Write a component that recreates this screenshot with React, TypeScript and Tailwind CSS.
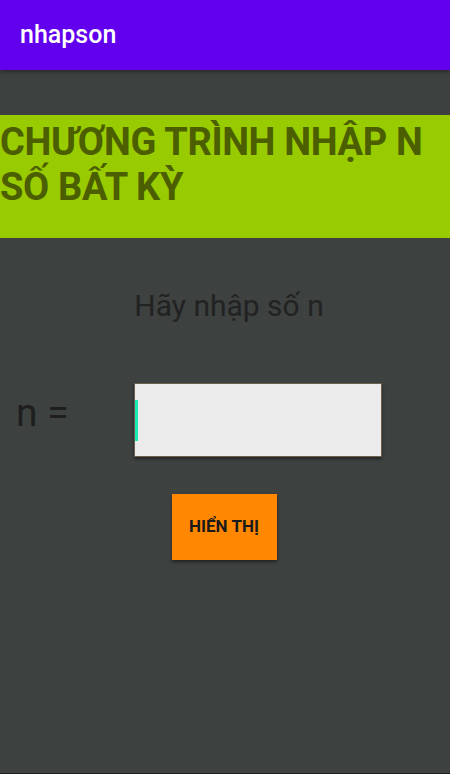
import React from "react";

export default function App() {
  return (
    <div
      className="w-[450px] h-[774px] bg-[#3d4140] flex flex-col overflow-hidden border-b border-[#1b1f1d]"
      style={{ fontFamily: "Roboto, 'Noto Sans', sans-serif" }}
    >
      <div className="h-[70px] shrink-0 bg-[#6200ee] flex items-center pl-[20px] shadow-[0_2px_4px_rgba(0,0,0,0.35)] relative z-10">
        <span className="text-white text-[25px] font-medium leading-none mt-[-2px]">nhapson</span>
      </div>

      <div className="mt-[45px] h-[123px] bg-[#99cc00] pt-[5px] shrink-0">
        <div className="text-[#4b5e00] text-[38px] font-bold leading-[45px] tracking-[-0.35px]">
          CHƯƠNG TRÌNH NHẬP N
          <br />
          SỐ BẤT KỲ
        </div>
      </div>

      <div className="mt-[50px] flex justify-center pl-[8px]">
        <span className="text-[#222222] text-[30px] leading-[35px]">Hãy nhập số n</span>
      </div>

      <div className="mt-[60px] flex items-start">
        <span className="ml-[16px] mt-[7px] text-[#1e1e1e] text-[39px] leading-[47px] w-[118px]">n =</span>
        <div className="relative w-[248px] h-[74px] bg-[#ebebeb] border border-[#6e6048] shadow-[0_2px_3px_rgba(0,0,0,0.45)]">
          <div className="absolute left-0 top-[16px] w-[3px] h-[41px] bg-[#1de9b6]" />
        </div>
      </div>

      <div className="mt-[37px] flex justify-center pr-[2px]">
        <button className="w-[105px] h-[66px] bg-[#ff8800] shadow-[0_2px_3px_rgba(0,0,0,0.45)] flex items-center justify-center text-[#1a1a1a] text-[17px] font-bold">
          HIỂN THỊ
        </button>
      </div>
    </div>
  );
}
